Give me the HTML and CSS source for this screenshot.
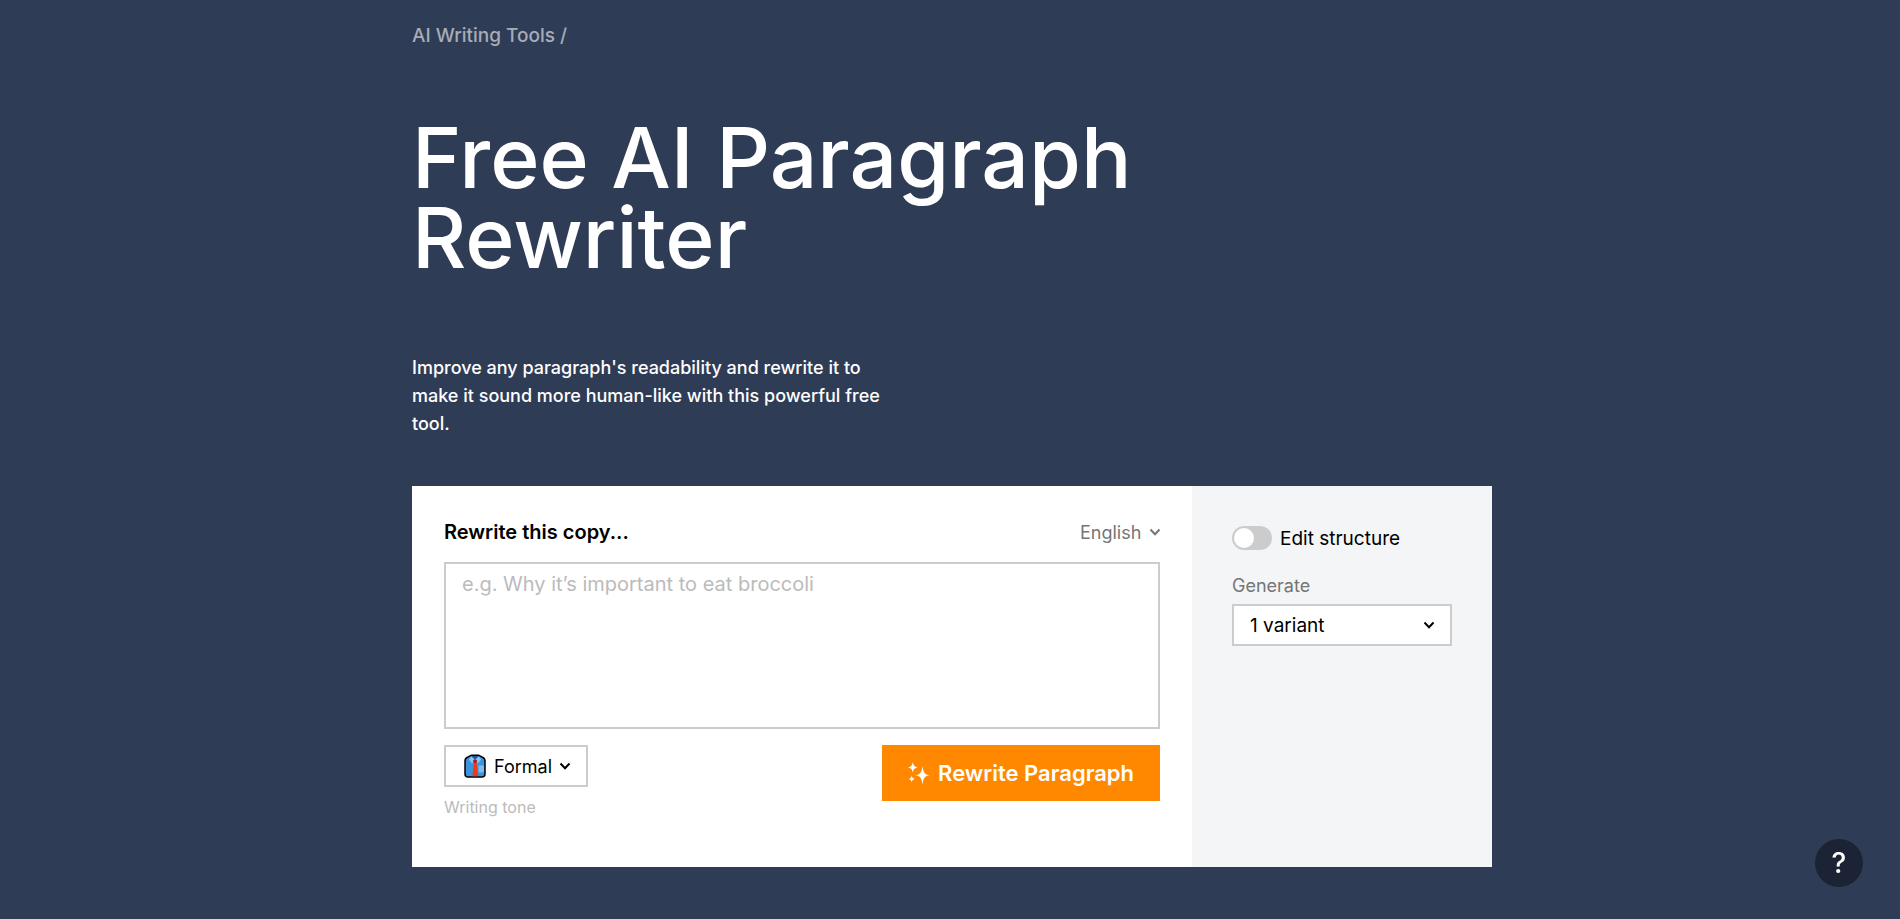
FILE: index.html
```
<!DOCTYPE html>
<html lang="en">
<head>
  <meta charset="UTF-8">
  <meta name="viewport" content="width=device-width, initial-scale=1">
  <title>Free AI Paragraph Rewriter</title>
  <link rel="stylesheet" href="styles.css">
</head>
<body>
  <main class="container">
    <nav class="breadcrumb">
      <a href="#">AI Writing Tools</a> /
    </nav>

    <h1 class="title">Free AI Paragraph Rewriter</h1>

    <p class="intro">Improve any paragraph's readability and rewrite it to make it sound more human-like with this powerful free tool.</p>

    <form class="tool">
      <div class="tool-main">
        <div class="tool-header">
          <label class="tool-label" for="copy">Rewrite this copy...</label>
          <div class="select-wrap language">
            <select id="language" aria-label="Language">
              <option>English</option>
            </select>
            <svg class="chevron" viewBox="0 0 10 8"><path d="M.5 1.500L5 6.200l4.500-4.700"/></svg>
          </div>
        </div>

        <textarea id="copy" class="copy" placeholder="e.g. Why it’s important to eat broccoli"></textarea>

        <div class="tool-footer">
          <div class="tone">
            <button type="button" class="tone-button" id="tone">
              <svg class="shirt" viewBox="0 0 22 24">
                <path d="M4 3L7.500 1.200h7L18 3q3 1 3 4V20q0 3-3 3H4q-3 0-3-3V7q0-3 3-4z" fill="#3b94dd" stroke="#000" stroke-width="1.500"/>
                <path d="M7.500 2h7L11 6z" fill="#1557a0"/>
                <path d="M7 2.500L5 5.500l3 4 3-4zM15 2.500l2 3-3 4-3-4z" fill="#8fc4ee"/>
                <path d="M14.500 11.500h5.500V17l-1 1.500h-4.500z" fill="#7fbaf0"/>
                <path d="M10 8.500h2.500l1.700 13.800H8.300z" fill="#f03a17"/>
                <path d="M9 6.500l2-1.500 2.200 1.500-1 2.500H10z" fill="#b3122a"/>
              </svg>
              Formal
              <svg class="chevron" viewBox="0 0 10 8"><path d="M.5 1.500L5 6.200l4.500-4.700"/></svg>
            </button>
            <label class="tone-label" for="tone">Writing tone</label>
          </div>

          <button type="submit" class="submit-button">
            <svg class="sparkles" viewBox="0 0 22 23">
              <path d="M14.500 4c.8 6.500 2 8.500 7.500 9.300-5.500.8-6.700 2.700-7.500 9.500-.8-6.800-2-8.700-7.500-9.500 5.500-.8 6.700-2.800 7.500-9.300z"/>
              <path d="M4.800 0c.7 3.700 1.500 4.600 4.900 5.400-3.400.8-4.200 1.700-4.900 5.200-.7-3.500-1.500-4.400-4.800-5.200C3.300 4.600 4.100 3.700 4.800 0z"/>
              <path d="M3.700 13.500c.5 2.300 1.100 2.900 3.200 3.400-2.100.5-2.700 1.200-3.200 3.500-.5-2.300-1.100-3-3.200-3.500 2.100-.5 2.700-1.100 3.200-3.400z"/>
            </svg>
            Rewrite Paragraph
          </button>
        </div>
      </div>

      <div class="tool-side">
        <label class="switch-row">
          <input type="checkbox" class="switch">
          Edit structure
        </label>

        <label class="side-label" for="variants">Generate</label>
        <div class="select-wrap variants">
          <select id="variants">
            <option>1 variant</option>
            <option>2 variants</option>
            <option>3 variants</option>
          </select>
          <svg class="chevron" viewBox="0 0 10 8"><path d="M.5 1.500L5 6.200l4.500-4.700"/></svg>
        </div>
      </div>
    </form>
  </main>

  <button type="button" class="help-button" aria-label="Help">?</button>
</body>
</html>
```

FILE: styles.css
```
* {
  box-sizing: border-box;
}

body {
  margin: 0;
  min-height: 100vh;
  background-color: #2f3c56;
  font-family: Inter, "Liberation Sans", sans-serif;
  color: #fff;
}

button,
select,
textarea {
  font-family: inherit;
  color: inherit;
}

.container {
  max-width: 1084px;
  margin: 0 auto;
  padding: 22px 0 48px 4px;
}

.breadcrumb {
  font-size: 19px;
  font-weight: 500;
  line-height: 28px;
  color: #a7acb7;
}

.breadcrumb a {
  color: inherit;
  text-decoration: none;
}

.title {
  max-width: 800px;
  margin: 68px 0 76px;
  font-size: 84px;
  font-weight: 500;
  line-height: 80px;
}

.intro {
  max-width: 480px;
  margin: 0 0 48px;
  font-size: 18px;
  font-weight: 500;
  line-height: 28px;
}

.tool {
  display: flex;
  background-color: #fff;
  color: #000;
}

.tool-main {
  flex: 1;
  padding: 32px;
}

.tool-side {
  width: 300px;
  padding: 40px;
  background-color: #f3f5f7;
}

.tool-header {
  display: flex;
  align-items: center;
  justify-content: space-between;
  height: 28px;
  margin-bottom: 16px;
}

.tool-label {
  font-size: 20px;
  font-weight: 600;
}

/* the arrow sits over the select's own box */
.select-wrap {
  display: grid;
  align-items: center;
}

.select-wrap select {
  grid-area: 1 / 1;
  appearance: none;
  border: 0;
  background: none;
}

.select-wrap .chevron {
  grid-area: 1 / 1;
  justify-self: end;
  pointer-events: none;
}

.chevron {
  width: 10px;
  height: 8px;
  overflow: visible;
  fill: none;
  stroke: currentColor;
  stroke-width: 2;
}

.language {
  color: #757575;
}

.language select {
  padding: 0 18px 0 0;
  font-size: 18px;
}

.copy {
  display: block;
  width: 100%;
  height: 167px;
  padding: 6px 16px;
  border: 2px solid #ccc;
  resize: none;
  outline: none;
  font-size: 20px;
  line-height: 28px;
}

.copy::placeholder {
  color: #bbb;
}

.tool-footer {
  display: flex;
  align-items: flex-start;
  justify-content: space-between;
  margin-top: 16px;
  padding-bottom: 16px;
}

.tone {
  display: flex;
  flex-direction: column;
  align-items: flex-start;
  gap: 8px;
}

.tone-button {
  display: flex;
  align-items: center;
  gap: 8px;
  height: 42px;
  padding: 0 16px 0 18px;
  border: 2px solid #ccc;
  background-color: #fff;
  font-size: 18px;
  cursor: pointer;
}

.shirt {
  width: 22px;
  height: 24px;
}

.tone-label {
  font-size: 16px;
  line-height: 24px;
  color: #bbb;
}

.submit-button {
  display: flex;
  align-items: center;
  gap: 8px;
  height: 56px;
  padding: 0 26px;
  border: 0;
  background-color: #ff8800;
  color: #fff;
  font-size: 22px;
  font-weight: 600;
  cursor: pointer;
}

.sparkles {
  width: 22px;
  height: 23px;
  fill: currentColor;
}

.switch-row {
  display: flex;
  align-items: center;
  gap: 8px;
  height: 24px;
  font-size: 19px;
}

.switch {
  appearance: none;
  display: flex;
  width: 40px;
  height: 24px;
  margin: 0;
  padding: 2px;
  border-radius: 12px;
  background-color: #ccc;
  cursor: pointer;
}

.switch::before {
  content: "";
  width: 20px;
  height: 20px;
  border-radius: 50%;
  background-color: #fff;
}

.switch:checked {
  justify-content: flex-end;
  background-color: #ff8800;
}

.side-label {
  display: block;
  margin: 24px 0 6px;
  font-size: 18px;
  line-height: 24px;
  color: #757575;
}

.variants {
  height: 42px;
  padding: 0 16px;
  border: 2px solid #ccc;
  background-color: #fff;
}

.variants select {
  padding: 0;
  font-size: 19px;
}

.help-button {
  position: fixed;
  right: 37px;
  bottom: 32px;
  width: 48px;
  height: 48px;
  padding: 0;
  border: 0;
  border-radius: 50%;
  background-color: #1c2334;
  color: #fff;
  font-size: 28px;
  font-weight: 500;
  cursor: pointer;
}
```
